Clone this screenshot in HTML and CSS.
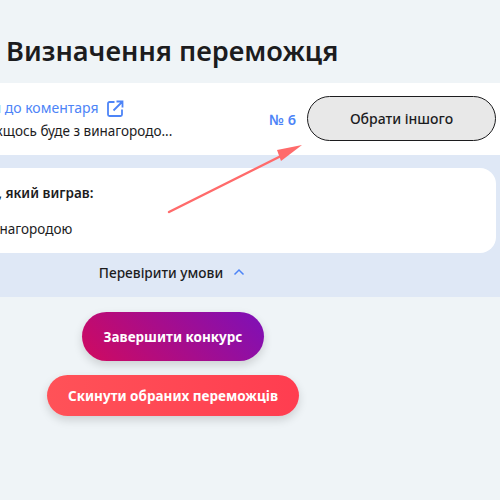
FILE: index.html
```html
<!DOCTYPE html>
<html lang="uk">
<head>
    <meta charset="UTF-8">
    <title>Визначення переможця</title>
    <link rel="stylesheet" href="styles.css">
</head>
<body>
    <h1 class="title">Визначення переможця</h1>

    <section class="winner-row">
        <div class="winner-info">
            <a class="comment-link">Перейти до коментаря
                <svg class="link-icon" width="17" height="17" viewBox="0 0 17 17" fill="none" stroke="#4d84f7" stroke-width="1.800">
                    <path d="M7.500 2H2.500a1.500 1.500 0 0 0-1.500 1.500v11a1.500 1.500 0 0 0 1.500 1.500h11a1.500 1.500 0 0 0 1.500-1.500V9.500"/>
                    <path d="M6.500 10.500L15 2M9.500 1.500h6v6"/>
                </svg>
            </a>
            <p class="comment-text">Якщось буде з винагородо...</p>
        </div>
        <span class="winner-num">№ 6</span>
        <button class="btn-other">Обрати іншого</button>
    </section>

    <section class="terms">
        <div class="terms-card">
            <p class="terms-head">Коментар, який виграв:</p>
            <p class="terms-body">Якщось буде з винагородою</p>
        </div>
        <div class="terms-toggle">
            <span>Перевірити умови</span>
            <svg width="12" height="8" viewBox="0 0 12 8" fill="none" stroke="#4d84f7" stroke-width="1.500"><path d="M1.500 6.500L6 2l4.500 4.500"/></svg>
        </div>
    </section>

    <div class="actions">
        <button class="btn btn-finish">Завершити конкурс</button>
        <button class="btn btn-reset">Скинути обраних переможців</button>
    </div>

    <svg class="arrow" width="150" height="80" viewBox="0 0 150 80">
        <path d="M4 72L120 14" stroke="#ff6b6b" stroke-width="2.500" stroke-linecap="round"/>
        <path d="M137 5L112 10L116 21Z" fill="#ff6b6b"/>
    </svg>
</body>
</html>
```
FILE: styles.css
```css
* {
    box-sizing: border-box;
}

body {
    margin: 0;
    width: 500px;
    height: 500px;
    overflow: hidden;
    position: relative;
    background: #eff4f7;
    font-family: "Noto Sans", "Open Sans", sans-serif;
    color: #1c1c1e;
}

p {
    margin: 0;
}

.title {
    margin: 0;
    padding: 33px 0 0 6px;
    height: 83px;
    font-size: 27.200px;
    line-height: 36px;
    font-weight: 600;
    white-space: nowrap;
}

.winner-row {
    height: 72px;
    background: #fff;
    display: flex;
    align-items: center;
    padding-right: 4px;
}

.winner-info {
    margin-left: -57px;
    flex: 1;
    white-space: nowrap;
}

.comment-link {
    display: flex;
    align-items: center;
    gap: 9px;
    font-size: 14px;
    line-height: 24px;
    color: #4d84f7;
}

.comment-text {
    margin-left: 44px;
    font-size: 13.500px;
    line-height: 22px;
}

.winner-num {
    font-size: 14.500px;
    font-weight: 600;
    color: #4d84f7;
    margin-right: 11px;
}

.btn-other {
    width: 189px;
    height: 45px;
    margin-bottom: 2px;
    border: 1px solid #1c1c1e;
    border-radius: 23px;
    background: #e8e8e8;
    font: 500 14px "Noto Sans", sans-serif;
    color: #1c1c1e;
}

.terms {
    height: 142px;
    background: #dfe8f6;
    padding: 13px 4px 0 0;
}

.terms-card {
    height: 85px;
    background: #fff;
    border-radius: 0 16px 16px 0;
    margin-left: -69px;
    padding-top: 15px;
    white-space: nowrap;
}

.terms-head {
    font-size: 13.500px;
    font-weight: 600;
    line-height: 20px;
}

.terms-body {
    margin-top: 16px;
    font-size: 13.500px;
    line-height: 20px;
    margin-left: -44px;
}

.terms-toggle {
    width: 344px;
    height: 38px;
    display: flex;
    align-items: center;
    justify-content: center;
    gap: 10px;
    font-size: 13.700px;
    font-weight: 500;
}

.actions {
    width: 346px;
    padding-top: 15px;
    display: flex;
    flex-direction: column;
    align-items: center;
    gap: 14px;
}

.btn {
    border: none;
    color: #fff;
    font: 700 13.500px "Noto Sans", sans-serif;
}

.btn-finish {
    width: 182px;
    height: 49px;
    border-radius: 25px;
    background: linear-gradient(45deg, #d00a5f, #7d10b8);
    box-shadow: 0 4px 10px rgba(0, 0, 0, 0.15);
}

.btn-reset {
    width: 252px;
    height: 41px;
    border-radius: 21px;
    background: linear-gradient(90deg, #ff5258, #ff3d50);
    box-shadow: 0 4px 10px rgba(0, 0, 0, 0.15);
}

.arrow {
    position: absolute;
    left: 165px;
    top: 140px;
}
```
